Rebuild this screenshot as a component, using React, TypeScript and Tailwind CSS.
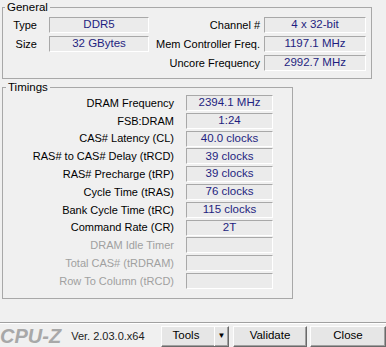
import React from "react";

const font = { fontFamily: '"Liberation Sans", Arial, sans-serif' };

type Row = { label: string; value?: string; dim?: boolean };

const timings: Row[] = [
  { label: "DRAM Frequency", value: "2394.1 MHz" },
  { label: "FSB:DRAM", value: "1:24" },
  { label: "CAS# Latency (CL)", value: "40.0 clocks" },
  { label: "RAS# to CAS# Delay (tRCD)", value: "39 clocks" },
  { label: "RAS# Precharge (tRP)", value: "39 clocks" },
  { label: "Cycle Time (tRAS)", value: "76 clocks" },
  { label: "Bank Cycle Time (tRC)", value: "115 clocks" },
  { label: "Command Rate (CR)", value: "2T" },
  { label: "DRAM Idle Timer", dim: true },
  { label: "Total CAS# (tRDRAM)", dim: true },
  { label: "Row To Column (tRCD)", dim: true },
];

function Field({ value, className }: { value?: string; className: string }) {
  return (
    <div
      className={`h-4 shrink-0 flex items-center justify-center bg-[#ebebeb] border border-[#a8a8a8] border-r-white border-b-white text-[11.5px] leading-none text-[#1e1e80] whitespace-nowrap ${className}`}
    >
      {value}
    </div>
  );
}

function Btn({ children, className }: { children: React.ReactNode; className: string }) {
  return (
    <div
      className={`h-[21px] shrink-0 flex items-center justify-center bg-[#e6e6e6] border border-[#fdfdfd] border-r-[#6a6a6a] border-b-[#6a6a6a] shadow-[inset_-1px_-1px_0_#a0a0a0] text-[11.5px] text-black ${className}`}
    >
      {children}
    </div>
  );
}

export default function App() {
  return (
    <div className="w-[386px] h-[347px] bg-[#f0f0f0] flex flex-col overflow-hidden" style={font}>
      <fieldset className="ml-[2px] w-[370px] h-[79px] border border-[#a8a8a8]">
        <legend className="ml-[2px] px-[2px] text-[11.5px] leading-[14px] text-black">General</legend>
        <div className="pt-[3px] flex flex-col gap-[3px] text-[11px] text-black whitespace-nowrap">
          <div className="flex items-center h-4">
            <span className="w-[34px] text-right">Type</span>
            <Field value="DDR5" className="ml-[12px] w-[100px]" />
            <span className="flex-1 text-right">Channel #</span>
            <Field value="4 x 32-bit" className="ml-[4px] w-[102px] mr-[5px]" />
          </div>
          <div className="flex items-center h-4">
            <span className="w-[34px] text-right">Size</span>
            <Field value="32 GBytes" className="ml-[12px] w-[100px]" />
            <span className="flex-1 text-right">Mem Controller Freq.</span>
            <Field value="1197.1 MHz" className="ml-[4px] w-[102px] mr-[5px]" />
          </div>
          <div className="flex items-center h-4">
            <span className="flex-1 text-right">Uncore Frequency</span>
            <Field value="2992.7 MHz" className="ml-[4px] w-[102px] mr-[5px]" />
          </div>
        </div>
      </fieldset>

      <fieldset className="mt-px ml-[2px] w-[291px] h-[219px] border border-[#a8a8a8]">
        <legend className="ml-[3px] px-[2px] text-[11.5px] leading-[14px] text-black">Timings</legend>
        <div className="pt-px flex flex-col gap-[1.8px] text-[11px] whitespace-nowrap">
          {timings.map((r) => (
            <div key={r.label} className="flex items-center h-4">
              <span className={`flex-1 text-right ${r.dim ? "text-[#a0a0a0]" : "text-black"}`}>{r.label}</span>
              <Field value={r.value} className="ml-[12px] w-[87px] mr-[19px]" />
            </div>
          ))}
        </div>
      </fieldset>

      <div className="mt-[23px] h-px bg-[#a0a0a0]" />
      <div className="border-t border-white flex items-center h-[24px] pt-px">
        <span className="w-[66px] text-[20px] font-bold italic text-[#a8a8a8] leading-none">CPU-Z</span>
        <span className="ml-[6px] w-[91px] text-[11px] text-[#222] whitespace-nowrap">Ver. 2.03.0.x64</span>
        <Btn className="w-[68px]">
          <span className="flex-1 text-center pr-[4px]">Tools</span>
          <span className="h-full w-px bg-[#a0a0a0] border-r border-white" />
          <span className="w-[13px] text-center text-[8px]">▼</span>
        </Btn>
        <Btn className="ml-[4px] w-[74px]">Validate</Btn>
        <Btn className="ml-[3px] w-[76px]">Close</Btn>
      </div>
    </div>
  );
}
